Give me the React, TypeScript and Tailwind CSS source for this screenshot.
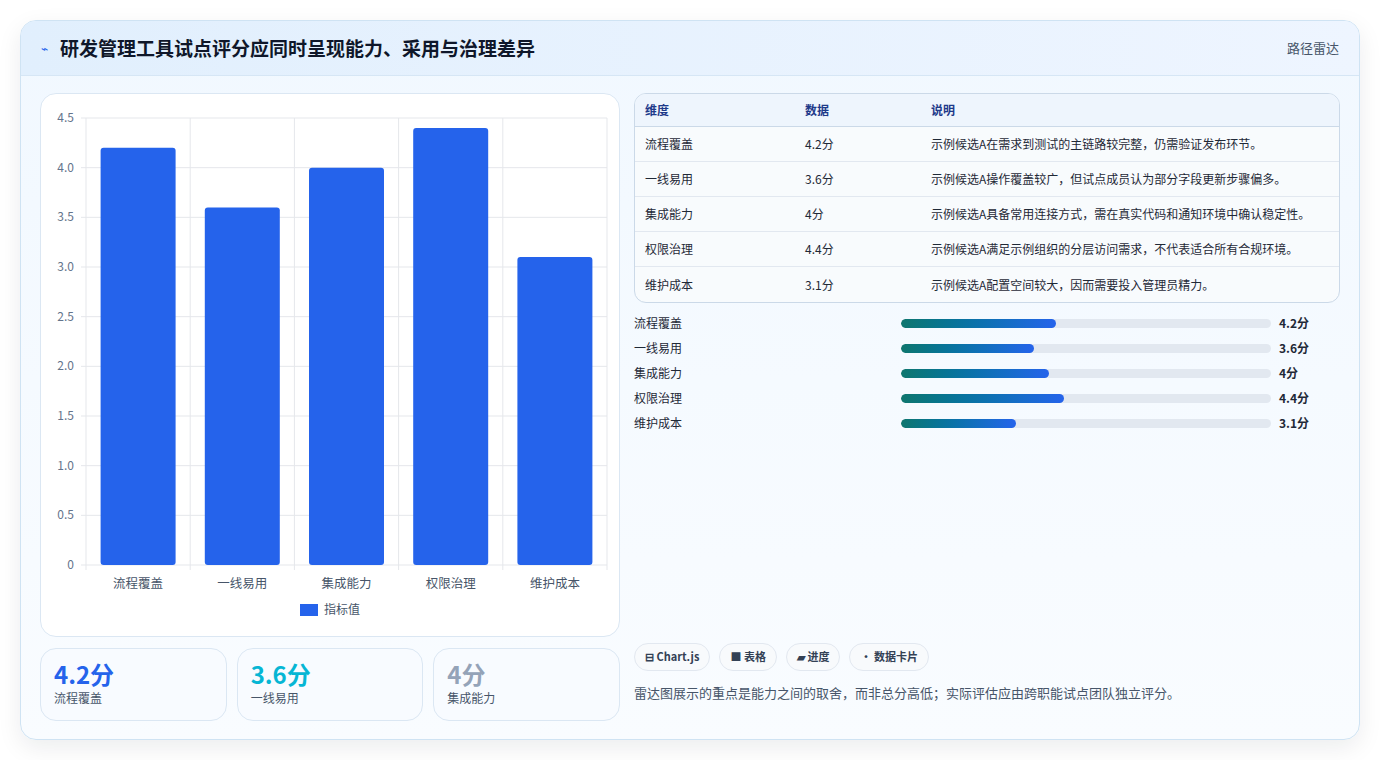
const rows = [
  { k: "流程覆盖", v: 4.2, d: "示例候选A在需求到测试的主链路较完整，仍需验证发布环节。" },
  { k: "一线易用", v: 3.6, d: "示例候选A操作覆盖较广，但试点成员认为部分字段更新步骤偏多。" },
  { k: "集成能力", v: 4, d: "示例候选A具备常用连接方式，需在真实代码和通知环境中确认稳定性。" },
  { k: "权限治理", v: 4.4, d: "示例候选A满足示例组织的分层访问需求，不代表适合所有合规环境。" },
  { k: "维护成本", v: 3.1, d: "示例候选A配置空间较大，因而需要投入管理员精力。" },
];

const font = { fontFamily: '"Noto Sans CJK SC", "Noto Sans", sans-serif' };

function Chart() {
  // plot: x 45..566 within svg (svg starts at card x=40), y 22..469
  const x0 = 45, x1 = 566, yTop = 22, yBot = 469;
  const h = yBot - yTop;
  const cw = (x1 - x0) / 5;
  const ticks = [0, 0.5, 1, 1.5, 2, 2.5, 3, 3.5, 4, 4.5];
  return (
    <svg width="578" height="530" className="block">
      {ticks.map((t) => {
        const y = yBot - (t / 4.5) * h;
        return (
          <g key={t}>
            <line x1={x0 - 5} x2={x1} y1={y} y2={y} stroke="#e5e7eb" />
            <text x={x0 - 12} y={y + 4} textAnchor="end" fontSize="12" fill="#64748b" style={font}>
              {t === 0 ? "0" : t.toFixed(1)}
            </text>
          </g>
        );
      })}
      {[0, 1, 2, 3, 4, 5].map((i) => (
        <line key={i} x1={x0 + i * cw} x2={x0 + i * cw} y1={yTop} y2={yBot + 5} stroke="#e5e7eb" />
      ))}
      {rows.map((r, i) => {
        const bh = (r.v / 4.5) * h;
        const bx = x0 + i * cw + (cw - 75) / 2;
        return (
          <g key={r.k}>
            <rect x={bx} y={yBot - bh} width="75" height={bh} rx="3" fill="#2563eb" />
            <text x={x0 + i * cw + cw / 2} y={yBot + 23} textAnchor="middle" fontSize="12.5" fill="#475569" style={font}>
              {r.k}
            </text>
          </g>
        );
      })}
      <rect x="259" y="508" width="18" height="12" fill="#2563eb" />
      <text x="283" y="518" fontSize="12" fill="#475569" style={font}>指标值</text>
    </svg>
  );
}

export default function App() {
  return (
    <div className="min-h-screen bg-white p-5" style={font}>
      <div className="w-[1340px] h-[720px] rounded-2xl border border-[#cfe3f3] bg-gradient-to-b from-[#f1f8ff] to-[#f9fcff] shadow-[0_8px_24px_rgba(15,23,42,0.08)] overflow-hidden flex flex-col">
        <div className="h-[55px] shrink-0 flex items-center justify-between px-5 bg-gradient-to-r from-[#e1effd] to-[#eef5ff] border-b border-[#d6e6f5]">
          <div className="flex items-center gap-3">
            <span className="text-[#2563eb] text-xs">⌁</span>
            <h1 className="text-[19px] font-bold text-[#0f172a]">研发管理工具试点评分应同时呈现能力、采用与治理差异</h1>
          </div>
          <span className="text-[13px] text-[#475569]">路径雷达</span>
        </div>
        <div className="flex gap-[14px] px-[19px] pt-[17px]">
          <div className="w-[580px] flex flex-col gap-[11px]">
            <div className="h-[544px] rounded-2xl border border-[#dbe7f3] bg-white pt-[2px]">
              <Chart />
            </div>
            <div className="grid grid-cols-3 gap-[10px]">
              {[
                ["4.2分", "流程覆盖", "text-[#2563eb]"],
                ["3.6分", "一线易用", "text-[#06b6d4]"],
                ["4分", "集成能力", "text-[#94a3b8]"],
              ].map(([v, l, c]) => (
                <div key={l} className="h-[73px] rounded-2xl border border-[#dbe7f3] bg-[#f8fbff] px-[13px] pt-[9px]">
                  <div className={`text-[24px] font-bold leading-8 ${c}`}>{v}</div>
                  <div className="text-xs text-[#475569]">{l}</div>
                </div>
              ))}
            </div>
          </div>
          <div className="flex-1 flex flex-col">
            <div className="rounded-xl border border-[#cbd9e8] overflow-hidden bg-[#f8fbfd]">
              <div className="flex h-[33px] items-center bg-[#eef5fd] border-b border-[#cbd9e8] text-xs font-semibold text-[#1e3a8a]">
                <div className="w-[170px] pl-[10px]">维度</div>
                <div className="w-[126px]">数据</div>
                <div>说明</div>
              </div>
              {rows.map((r, i) => (
                <div key={r.k} className={`flex h-[35px] items-center text-xs text-[#1f2937] ${i < 4 ? "border-b border-[#e2e8f0]" : ""}`}>
                  <div className="w-[170px] pl-[10px]">{r.k}</div>
                  <div className="w-[126px]">{r.v}分</div>
                  <div>{r.d}</div>
                </div>
              ))}
            </div>
            <div className="flex flex-col gap-[7px] pt-[11px]">
              {rows.map((r) => (
                <div key={r.k} className="flex items-center h-[18px] text-xs text-[#1f2937]">
                  <div className="w-[267px]">{r.k}</div>
                  <div className="w-[370px] h-[9px] rounded-full bg-[#e2e8f0] overflow-hidden">
                    <div className="h-full rounded-full bg-gradient-to-r from-[#0f766e] to-[#2563eb]" style={{ width: `${r.v * 10}%` }} />
                  </div>
                  <div className="pl-2 font-bold">{r.v}分</div>
                </div>
              ))}
            </div>
            <div className="mt-auto pb-[19px]">
              <div className="flex gap-[9px] mb-[12px]">
                {["⊟ Chart.js", "■ 表格", "▰ 进度", "• 数据卡片"].map((t) => (
                  <span key={t} className="h-[28px] flex items-center rounded-full border border-[#e2e8f0] bg-[#f8fafc] px-[10px] text-[11px] font-semibold text-[#334155]">{t}</span>
                ))}
              </div>
              <p className="text-[13px] text-[#475569]">雷达图展示的重点是能力之间的取舍，而非总分高低；实际评估应由跨职能试点团队独立评分。</p>
            </div>
          </div>
        </div>
      </div>
    </div>
  );
}
